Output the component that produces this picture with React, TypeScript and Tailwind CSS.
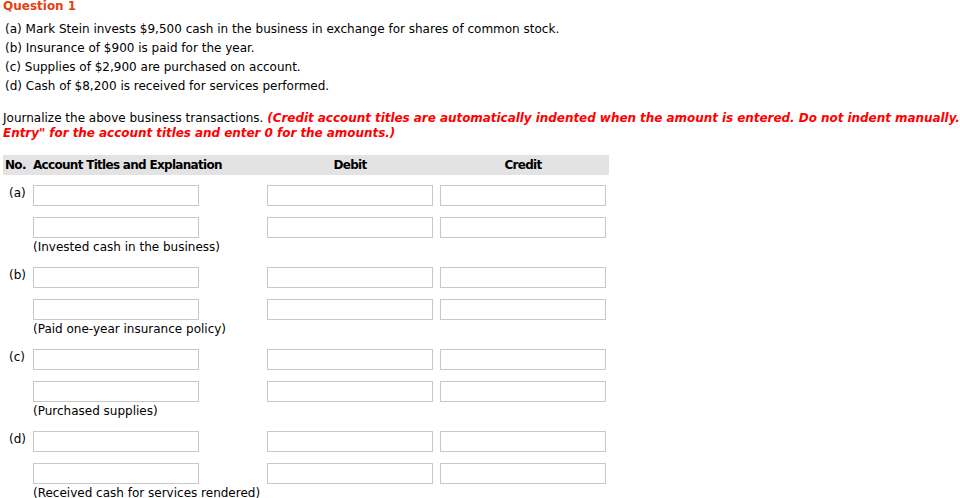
import React from "react";

const groups = [
  { label: "(a)", note: "(Invested cash in the business)" },
  { label: "(b)", note: "(Paid one-year insurance policy)" },
  { label: "(c)", note: "(Purchased supplies)" },
  { label: "(d)", note: "(Received cash for services rendered)" },
];

function Box({ w = "w-[166px]" }: { w?: string }) {
  return <div className={`${w} h-[21px] border border-[#c8c8c8] bg-white`} />;
}

export default function App() {
  return (
    <div
      className="w-[960px] h-[498px] overflow-hidden bg-white text-black text-[12px]"
      style={{ fontFamily: '"DejaVu Sans", Verdana, sans-serif' }}
    >
      <div className="pl-[3px] font-bold text-[#e5410f] leading-[13px]">Question 1</div>
      <div className="mt-[7px] pl-[5px] leading-[19px]">
        <div>(a) Mark Stein invests $9,500 cash in the business in exchange for shares of common stock.</div>
        <div>(b) Insurance of $900 is paid for the year.</div>
        <div>(c) Supplies of $2,900 are purchased on account.</div>
        <div>(d) Cash of $8,200 is received for services performed.</div>
      </div>
      <div className="mt-[15px] pl-[3px] leading-[15px] whitespace-nowrap">
        <div>
          Journalize the above business transactions.{" "}
          <span className="text-[#ff0000] font-bold italic tracking-[-0.05px]">
            (Credit account titles are automatically indented when the amount is entered. Do not indent manually. If no entry is required, select "No
          </span>
        </div>
        <div className="text-[#ff0000] font-bold italic tracking-[-0.05px]">
          Entry" for the account titles and enter 0 for the amounts.)
        </div>
      </div>
      <div className="mt-[14px] ml-[3px] w-[606px] h-[20px] bg-[#e3e3e3] flex items-center font-bold tracking-[-0.7px]">
        <div className="w-[30px] pl-[2px]">No.</div>
        <div className="w-[234px]">Account Titles and Explanation</div>
        <div className="w-[166px] text-center">Debit</div>
        <div className="ml-[7px] w-[166px] text-center">Credit</div>
      </div>
      <div className="mt-[10px]">
        {groups.map((g) => (
          <div key={g.label} className="h-[82px] flex flex-col">
            <div className="flex items-start">
              <div className="w-[33px] pl-[9px] leading-[14px] pt-[1px]">{g.label}</div>
              <Box />
              <div className="w-[68px]" />
              <Box />
              <div className="w-[7px]" />
              <Box />
            </div>
            <div className="flex items-start mt-[11px]">
              <div className="w-[33px]" />
              <Box />
              <div className="w-[68px]" />
              <Box />
              <div className="w-[7px]" />
              <Box />
            </div>
            <div className="pl-[33px] leading-[15px] mt-[2px]">{g.note}</div>
          </div>
        ))}
      </div>
    </div>
  );
}
